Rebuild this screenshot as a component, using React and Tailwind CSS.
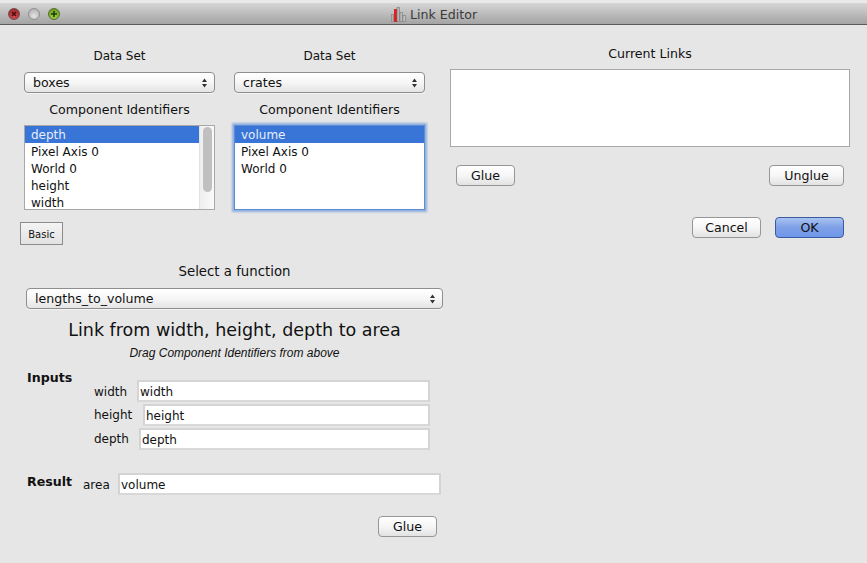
import React from "react";

const font = "font-['DejaVu_Sans',sans-serif]";

const Arrows = () => (
  <svg width="7" height="10" viewBox="0 0 7 10" className="shrink-0">
    <path d="M3.5 0.5 L6 4 L1 4 Z M3.5 9.5 L6 6 L1 6 Z" fill="#333" />
  </svg>
);

const Select = ({ value, className = "" }) => (
  <div className={`h-[21px] flex items-center justify-between pl-[8px] pr-[6px] rounded-[4px] border border-[#8e8e8e] bg-gradient-to-b from-white via-[#f6f6f6] to-[#e4e4e4] text-[12.6px] text-[#111] shadow-[0_1px_0_#f4f4f4] ${className}`}>
    <span className="pt-[1px]">{value}</span>
    <Arrows />
  </div>
);

const Button = ({ children, className = "" }) => (
  <button className={`h-[21px] flex items-center justify-center pt-[1px] rounded-[4px] border border-[#969696] bg-gradient-to-b from-white via-[#f6f6f6] to-[#e2e2e2] text-[12.6px] text-[#111] ${className}`}>
    {children}
  </button>
);

const Row = ({ selected, children }) => (
  <div className={`h-[17px] leading-[19px] pl-[6px] text-[12px] ${selected ? "bg-[#3875d7] text-[#e8eefa]" : "text-[#111]"}`}>
    {children}
  </div>
);

const Field = ({ value, className = "" }) => (
  <div className={`h-[22px] flex items-center pl-[1px] pt-[1px] bg-white border-2 border-[#d4d4d4] border-b-[#d8d8d8] text-[12px] text-[#111] ${className}`}>
    {value}
  </div>
);

const Chooser = ({ rows, focused, scroll }) => (
  <div className="w-[191px]">
    <div className="h-[18px] leading-[18px] text-center text-[12px] text-[#111]">Data Set</div>
    <Select value={rows.name} className="mt-[7px]" />
    <div className="mt-[8px] h-[18px] leading-[18px] text-center text-[12.6px] text-[#111]">Component Identifiers</div>
    <div className={`mt-[6px] h-[85px] overflow-hidden flex bg-white ${focused ? "border border-[#5f8bd2] shadow-[0_0_2px_2px_#8fafdf]" : "border border-[#a8a8a8]"}`}>
      <div className="flex-1">
        {rows.items.map((item, i) => (
          <Row key={item} selected={i === 0}>{item}</Row>
        ))}
      </div>
      {scroll && (
        <div className="w-[15px] pl-[3px] pt-[1px] bg-gradient-to-r from-[#eeeeee] to-[#fafafa] border-l border-[#e2e2e2]">
          <div className="w-[9px] h-[65px] rounded-[5px] bg-[#c0c0c0]" />
        </div>
      )}
    </div>
  </div>
);

const TitleBar = () => (
  <div className="h-[25px] flex items-center relative border-t-[3px] border-t-[#e9e9e9] border-b border-b-[#5a5a5a] bg-gradient-to-b from-[#d6d6d6] to-[#a4a4a4]">
    <div className="flex items-center gap-[8px] pl-[8px] mt-[1px]">
      <span className="w-[12px] h-[12px] rounded-full bg-[radial-gradient(circle_at_50%_70%,#d8545a,#8e1c20)] border border-[#7a4a4a] flex items-center justify-center">
        <svg width="6" height="6" viewBox="0 0 6 6">
          <path d="M1 1 L5 5 M5 1 L1 5" stroke="#4a0a0a" strokeWidth="1.5" />
        </svg>
      </span>
      <span className="w-[12px] h-[12px] rounded-full bg-[radial-gradient(circle_at_50%_70%,#e4e4e4,#a8a8a8)] border border-[#8f8f8f]" />
      <span className="w-[12px] h-[12px] rounded-full bg-[radial-gradient(circle_at_50%_70%,#a6d848,#5c8c14)] border border-[#56702e] flex items-center justify-center">
        <svg width="8" height="8" viewBox="0 0 8 8">
          <path d="M4 1 V7 M1 4 H7" stroke="#1d3a08" strokeWidth="1.6" />
        </svg>
      </span>
    </div>
    <div className="absolute left-[391px] top-[1px] flex items-center gap-[4px] text-[12.6px] leading-[18px] text-[#3a3a3a]">
      <svg width="15" height="16" viewBox="0 0 15 16">
        <rect x="0.5" y="8.5" width="2" height="7" fill="#b9b0a8" stroke="#7d7570" strokeWidth="0.5" />
        <rect x="3" y="3" width="3" height="13" fill="#d8222a" />
        <rect x="6" y="1.5" width="2.5" height="14" fill="#b4b4b4" stroke="#6f6f6f" strokeWidth="0.5" />
        <rect x="9" y="6.5" width="2.5" height="9" fill="#bdbdbd" stroke="#6f6f6f" strokeWidth="0.5" />
        <rect x="12" y="9.5" width="2.5" height="6" fill="#c4c4c4" stroke="#6f6f6f" strokeWidth="0.5" />
      </svg>
      <span className="mt-[2px]">Link Editor</span>
    </div>
  </div>
);

const boxes = { name: "boxes", items: ["depth", "Pixel Axis 0", "World 0", "height", "width"] };
const crates = { name: "crates", items: ["volume", "Pixel Axis 0", "World 0"] };

export default function App() {
  return (
    <div className={`w-[867px] h-[563px] overflow-hidden bg-[#e6e6e6] ${font}`}>
      <TitleBar />
      <div className="flex">
        {/* left side */}
        <div className="w-[450px] shrink-0">
          <div className="flex gap-[19px] pl-[24px] pt-[22px]">
            <Chooser rows={boxes} scroll />
            <Chooser rows={crates} focused />
          </div>
          <div className="pl-[20px] mt-[12px]">
            <div className="w-[43px] h-[23px] flex items-center justify-center pt-[2px] border border-[#8c8c8c] bg-gradient-to-b from-[#f4f4f4] to-[#e2e2e2] text-[10px] text-[#111]">
              Basic
            </div>
          </div>
          <div className="pl-[26px] mt-[17px] w-[443px]">
            <div className="h-[20px] leading-[20px] text-center text-[13.3px] text-[#111]">Select a function</div>
            <Select value="lengths_to_volume" className="mt-[6px]" />
            <div className="mt-[9px] h-[24px] leading-[24px] text-center text-[17.5px] text-[#111]">Link from width, height, depth to area</div>
            <div className="mt-[3px] h-[16px] leading-[16px] text-center text-[12px] italic text-[#111] font-['Liberation_Sans',sans-serif]">Drag Component Identifiers from above</div>
          </div>
          <div className="relative h-[83px] mt-[8px] pl-[137px] pt-[11px]">
            <div className="absolute left-[27px] top-[0px] text-[12.6px] font-bold text-[#111]">Inputs</div>
            <div className="flex items-center w-[293px]">
              <span className="absolute left-[94px] pt-[2px] text-[12px] text-[#111]">width</span>
              <Field value="width" className="w-full" />
            </div>
            <div className="flex items-center w-[293px] mt-[2px] justify-end">
              <span className="absolute left-[94px] text-[12px] text-[#111]">height</span>
              <Field value="height" className="w-[287px]" />
            </div>
            <div className="flex items-center w-[293px] mt-[2px] justify-end">
              <span className="absolute left-[94px] text-[12px] text-[#111]">depth</span>
              <Field value="depth" className="w-[291px]" />
            </div>
          </div>
          <div className="flex items-center pl-[27px] mt-[21px]">
            <span className="w-[56px] text-[12.6px] font-bold text-[#111] -mt-[3px]">Result</span>
            <span className="w-[35px] pt-[2px] text-[12px] text-[#111]">area</span>
            <Field value="volume" className="w-[323px]" />
          </div>
          <div className="flex justify-end w-[437px] mt-[21px]">
            <Button className="w-[59px]">Glue</Button>
          </div>
        </div>
        {/* right side */}
        <div className="w-[400px] shrink-0">
          <div className="mt-[20px] h-[18px] leading-[18px] text-center text-[12.6px] text-[#111]">Current Links</div>
          <div className="mt-[6px] h-[78px] bg-white border border-[#a8a8a8]" />
          <div className="flex justify-between pl-[6px] pr-[6px] mt-[18px]">
            <Button className="w-[59px]">Glue</Button>
            <Button className="w-[75px]">Unglue</Button>
          </div>
          <div className="flex justify-end gap-[14px] pr-[6px] mt-[31px]">
            <Button className="w-[69px]">Cancel</Button>
            <Button className="w-[69px] !border-[#3c5aa0] !from-[#a9c2f0] !via-[#7ea0e6] !to-[#6f97ea]">OK</Button>
          </div>
        </div>
      </div>
    </div>
  );
}
